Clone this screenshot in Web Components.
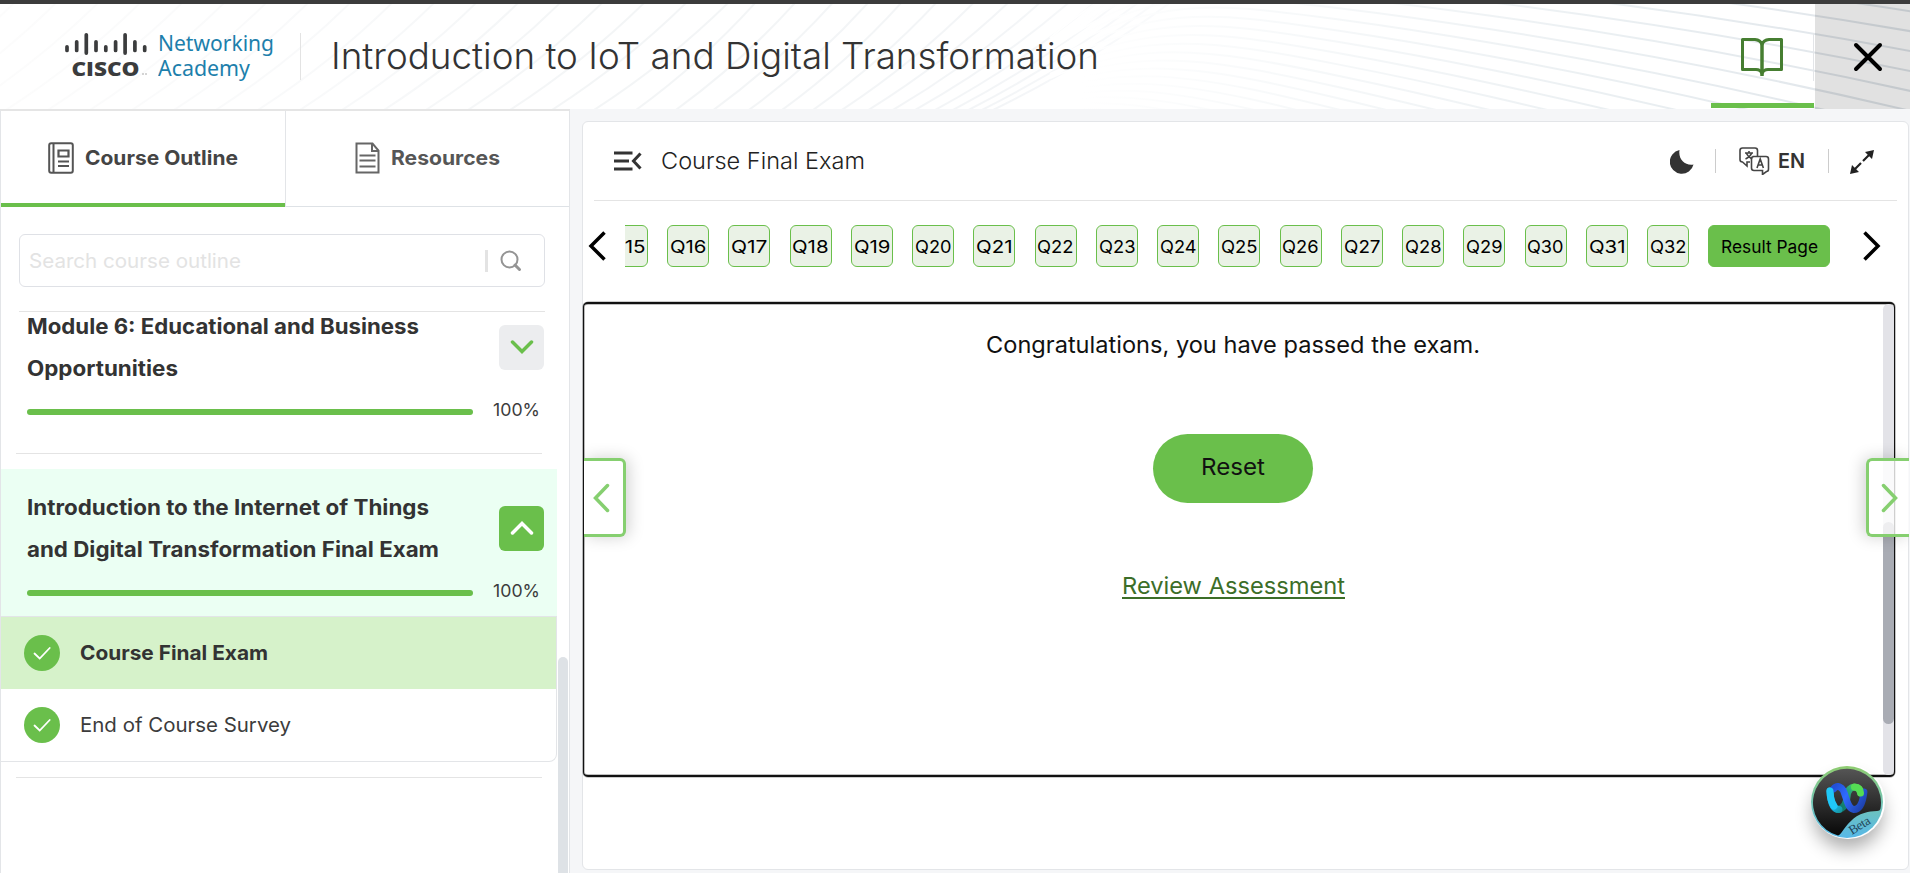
<!DOCTYPE html>
<html lang="en">
<head>
<meta charset="utf-8">
<title>Introduction to IoT and Digital Transformation</title>
<style>
html,body{margin:0;height:100%;overflow:hidden}
body{font-family:Inter,"Open Sans",sans-serif;color:#333;background:#f5f6f8}
</style>
</head>
<body>
<course-app></course-app>
<script>
const define = (name, html, setup) => customElements.define(name, class extends HTMLElement {
  constructor() {
    super();
    const t = document.createElement('template');
    t.innerHTML = html;
    this.attachShadow({ mode: 'open' }).append(t.content.cloneNode(true));
  }
  connectedCallback() { if (setup) setup(this, this.shadowRoot); }
});

/* A single line of text stretched to a given width */
define('fit-text', `<style>:host{display:inline-block;white-space:nowrap;text-decoration:inherit}span{display:inline-block;transform-origin:0 50%;text-decoration:inherit}</style><span><slot></slot></span>`, (el, root) => {
  const w = parseFloat(el.getAttribute('width')), s = root.querySelector('span');
  const now = s.getBoundingClientRect().width;
  if (w && now) { s.style.transform = `scaleX(${w / now})`; s.style.marginRight = (w - now) + 'px'; }
});

define('header-waves', `<style>:host{position:absolute;inset:0;overflow:hidden}svg{display:block}</style>
<svg width="1910" height="105" viewBox="0 4 1910 105" fill="none"><defs>
<linearGradient id="l" gradientUnits="userSpaceOnUse" x1="0" x2="1180" y1="0" y2="0"><stop offset="0" stop-color="#fcfcfc"/><stop offset=".3" stop-color="#f8f9fa"/><stop offset=".5" stop-color="#f3f5f6"/><stop offset=".85" stop-color="#f3f5f7"/><stop offset="1" stop-color="#fbfcfd"/></linearGradient>
<linearGradient id="r" gradientUnits="userSpaceOnUse" x1="1080" x2="1900" y1="0" y2="0"><stop offset="0" stop-color="#fff"/><stop offset=".25" stop-color="#f7f9fa"/><stop offset=".7" stop-color="#e9eef1"/><stop offset="1" stop-color="#dfe4e9"/></linearGradient></defs>
<g id="g" stroke-width="2"></g></svg>`, (el, root) => {
  let p = '', x = -120, gap = 47;
  while (x < 1000) {
    const run = x < 600 ? 135 : x < 800 ? 120 : 120 + (x - 800) * 0.3;
    p += `<path stroke="url(#l)" d="M${x} 110Q${x + run * .55} 62 ${x + run} 2"/>`;
    gap = x > 600 ? Math.max(11, gap - 2.2) : 42;
    x += gap;
  }
  for (let k = -9; k < 15; k++)
    p += `<path stroke="url(#r)" d="M1050 ${62 + k * 4}C1120 ${20 + 7 * k} 1180 ${12 + 9 * k} 1250 ${19 + 10 * k}S1600 ${67 + 15 * k} 1915 ${152 + 20 * k}"/>`;
  root.querySelector('#g').innerHTML = p;
});

define('cisco-logo', `<style>:host{display:flex;gap:11px;width:212px}
.n{color:#1d7fac;font:400 22px/25px "Noto Sans",sans-serif;margin-top:-1px;display:flex;flex-direction:column}
svg{display:block;overflow:visible}text{font:800 20px "Open Sans",sans-serif}</style>
<svg width="82" height="48" viewBox="65 31 82 48" fill="#3b3c3d">
<g stroke="#3b3c3d" stroke-width="3.7" stroke-linecap="round"><path d="M67 46.8v3.6M76.7 41.8v8.6M86.3 34.8v18.3M96 41.8v8.6M105.8 46.8v3.6M115.6 41.8v8.6M125.1 34.8v18.3M134.9 41.8v8.6M144.7 46.8v3.6"/></g>
<text x="71.500" y="75.700" textLength="68" lengthAdjust="spacingAndGlyphs">CISCO</text>
<path d="M142 74h2M145 74h2" stroke="#aaa"/></svg>
<div class="n"><fit-text width="116">Networking</fit-text><fit-text width="92">Academy</fit-text></div>`);

define('top-bar', `<style>
:host{display:block;position:relative;height:105px;border-top:4px solid #3c3c3c;background:#fff}
.row{position:relative;display:flex;height:105px}
cisco-logo{margin:27px 0 0 65px}
.t{margin-left:23px;height:47px;margin-top:29px;border-left:1px solid #e3e3e3;padding-left:30px;font-size:36.500px;font-weight:300;line-height:46px;color:#333}
.book{margin-left:auto;width:103px;height:99px;border-bottom:5px solid #6abf4b;display:flex;justify-content:center}
.book svg{margin:32px 2px 0 0}.d{width:1px;height:48px;margin:29px 1px 0 -1px;background:#e3e5e8}
.x{width:95px;background:rgba(0,0,0,.118);display:flex;align-items:center;justify-content:center}
.x svg{margin:1px 0 0 11px}
</style><header-waves></header-waves><div class="row"><cisco-logo></cisco-logo><div class="t"><fit-text width="768">Introduction to IoT and Digital Transformation</fit-text></div>
<div class="book"><svg width="42" height="42" viewBox="0 0 42 42" fill="none" stroke="#467e31" stroke-width="3"><path d="M1.500 3.500H14q5.500.5 7 5Q22.500 4 28 3.500H40.500V33.500H27q-4.500 0-6 4-1.500-4-6-4H1.500z" stroke-linejoin="round"/><path d="M21 8v32" stroke-width="3.500"/></svg></div><div class="d"></div>
<div class="x"><svg width="30" height="30" viewBox="0 0 30 30" stroke="#000" stroke-width="4" stroke-linecap="round"><path d="M3 3 27 27M27 3 3 27"/></svg></div></div>`);

define('side-tab', `<style>:host{display:flex;box-sizing:border-box;height:96px;flex:1;padding:0 0 1px 47px;font-weight:700;font-size:20px;color:#565656;border-bottom:1px solid #dee2e6;align-items:center;gap:11px}
:host([active]){color:#444;border-bottom:4px solid #6abf4b;padding-bottom:0;padding-top:2px;flex:none;width:284px}
:host(:not([active])){padding-left:69px;border-left:1px solid #e3e5e8}</style><slot name="icon"></slot><slot></slot>`);

define('search-box', `<style>:host{display:flex;box-sizing:border-box;width:526px;height:53px;border:1px solid #dfe1e6;border-radius:6px;margin:27px 0 0 18px;align-items:center;padding:0 22px 0 9px;font-size:20px;color:#e3e3e3}
i{width:3px;height:22px;background:#e3e3e3;margin:0 12px 0 auto}svg{display:block}</style>
<fit-text width="212">Search course outline</fit-text><i></i><svg width="22" height="22" viewBox="0 0 22 22" fill="none" stroke="#949494" stroke-width="2"><circle cx="9.500" cy="9.500" r="8"/><path d="M15 15l4.500 4.500" stroke-width="3" stroke-linecap="round"/></svg>`);

define('module-card', `<style>:host{display:block;box-sizing:border-box;padding:0 0 0 26px;width:556px}
.h{display:flex;justify-content:space-between;align-items:center;padding-right:13px}
.t{font-weight:700;font-size:21px;line-height:42px;height:84px;margin-left:-.5px;position:relative;top:.5px}
.b{width:45px;height:45px;border-radius:6px;background:#ecedef;display:flex;align-items:center;justify-content:center;color:#6abf4b}
:host([open]) .b{background:#6abf4b;color:#fff}:host([open]) svg{transform:scaleY(-1)}
.p{display:flex;align-items:center;height:24px;font-size:17.500px;margin-top:8px;color:#3c3c3c}
.p i{width:446px;height:6px;border-radius:3px;background:#6abf4b;margin-right:20px;margin-top:5px}</style>
<div class="h"><div class="t"><slot></slot></div><div class="b"><svg width="24" height="14" viewBox="0 0 24 14" fill="none" stroke="currentColor" stroke-width="3.500" stroke-linecap="round"><path d="M2.500 2 12 11.500 21.500 2"/></svg></div></div>
<div class="p"><i></i><fit-text width="47">100%</fit-text></div>`);

define('lesson-row', `<style>:host{display:flex;align-items:center;height:72px;box-sizing:border-box;padding-left:23px;gap:20px;font-size:20px;color:#3c3c3c}
:host([current]){background:#d6f2ca;font-weight:700;color:#333}svg{display:block}</style>
<svg width="36" height="36" viewBox="0 0 36 36"><circle cx="18" cy="18" r="18" fill="#6abf4b"/><path d="M10.500 18.500l5.200 5 10-10.500" fill="none" stroke="#fff" stroke-width="1.800" stroke-linecap="round"/></svg><slot></slot>`);

define('side-bar', `<style>:host{display:block;box-sizing:border-box;width:570px;height:764px;background:#fff;border:1px solid #e3e5e8;border-top:2px solid #e5e5e5;border-bottom:0;overflow:hidden}
.tabs{display:flex}.list{display:flex;justify-content:space-between}
.items{width:556px}hr{border:0;height:1px;background:#e4e4e4;margin:0 0 0 15px;width:526px}
hr.top{margin:24px 0 0 18px}.open{background:#ebfff3;padding-top:17px;margin-top:15px;height:130px}
.rows{border:1px solid #e3e5e8;border-left:0;border-radius:0 0 8px 0;background:#fff;width:555px}
.bar{width:10px;height:220px;border-radius:5px 5px 0 0;background:#dee2e6;margin:345px 1px 0 0}
</style>
<div class="tabs"><side-tab active><svg slot="icon" width="26" height="32" viewBox="0 0 26 32" fill="none" stroke="#555" stroke-width="2"><rect x="1.200" y="1.200" width="23.600" height="29.600" rx="2"/><path d="M5.500 1v30M10 19.500h11M10 24h11"/><path d="M10.500 8.500h10v6h-10z" stroke-width="2.200"/></svg><fit-text width="153">Course Outline</fit-text></side-tab>
<side-tab><svg slot="icon" width="25" height="32" viewBox="0 0 25 32" fill="none" stroke="#666" stroke-width="2"><path d="M1.500 1.500h16l6 7V30.500h-22zM17 2v7h6.500M4.500 13.500h16M4.500 18.500h16M4.500 24.500h16"/></svg><fit-text width="109">Resources</fit-text></side-tab></div>
<search-box></search-box><hr class="top">
<div class="list"><div class="items">
<module-card style="margin-top:-7px;position:relative"><fit-text width="392">Module 6: Educational and Business</fit-text><br><fit-text width="151">Opportunities</fit-text></module-card>
<hr style="margin-top:32px">
<div class="open"><module-card open><fit-text width="402">Introduction to the Internet of Things</fit-text><br><fit-text width="412">and Digital Transformation Final Exam</fit-text></module-card></div>
<div class="rows"><lesson-row current><fit-text width="188">Course Final Exam</fit-text></lesson-row><lesson-row><fit-text width="211">End of Course Survey</fit-text></lesson-row></div>
<hr style="margin-top:15px">
</div><div class="bar"></div></div>`);

define('exam-head', `<style>:host{display:flex;align-items:center;box-sizing:border-box;height:79px;margin:0 11px;border-bottom:1px solid #e4e4e4;padding:0 22px 0 20px;color:#222}
svg{display:block}.t{font-size:23px;font-weight:300;margin-left:18.500px;margin-right:auto}.v{width:1px;height:24px;background:#ccc}
.en{font-weight:600;font-size:20px;color:#333;margin:0 23px 0 8px}</style>
<svg width="28" height="20" viewBox="0 0 28 20" fill="none" stroke="#333" stroke-width="3"><path d="M0 2h18.500M0 10h15M0 18h18.500M26.500 2.500l-7 7.500 7 7.500"/></svg>
<div class="t"><fit-text width="204">Course Final Exam</fit-text></div>
<svg width="24" height="24" viewBox="0 0 24 24" fill="#333" style="margin-right:21px;margin-top:2px"><path d="M9.500 0A12 12 0 1 0 23.500 14.500C15 16 8 9 9.500 0z"/></svg><i class="v"></i>
<svg width="31" height="28" viewBox="0 0 31 28" fill="none" stroke="#444" stroke-width="1.600" style="margin-left:23px"><path d="M11 15H8v4l-4.500-4Q1 15 1 12.500V3.500Q1 1 3.500 1H16q2.500 0 2.500 2.500V9"/><path d="M13.500 9.500H27q2.500 0 2.500 2.500v10q0 2.500-2 2.500l-4 3v-4H15q-2.500 0-2.500-2.500v-9q0-2.500 2.500-2.500"/><path d="M6 6h8M10 4v2M7.500 6.500Q9 10 13 12M12.500 6.500Q11 10 6.500 12M18 21l3.200-9 3.200 9M19 18h4.500"/></svg>
<div class="en"><fit-text width="27">EN</fit-text></div><i class="v"></i>
<svg width="26" height="26" viewBox="0 0 26 26" fill="#222" stroke="#222" stroke-width="2.200" style="margin-left:20px;margin-top:1px"><path d="M14 12l6-6M12 14l-6 6" /><path d="M25 1l-2 9-7-7zM1 25l2-9 7 7z" stroke="none"/></svg>`);

define('q-chip', `<style>:host{flex:none;display:flex;box-sizing:border-box;width:42px;height:42px;border:1px solid #6abf4b;border-radius:6px;background:#eaf2e6;align-items:center;justify-content:center;color:#000;font-size:17.5px}
:host([active]){width:122px;background:#6abf4b}</style><slot></slot>`);

define('question-nav', `<style>:host{display:flex;align-items:center;height:42px;padding:24px 27px 0 5px}
.w{width:1213px;margin-left:18px;margin-right:auto;overflow:hidden;display:flex}.s{display:flex;gap:19.25px;margin-left:-19.250px}
svg{display:block;margin-top:-1px}</style>
<svg width="19" height="30" viewBox="0 0 19 30" fill="none" stroke="#000" stroke-width="3.500"><path d="M16.500 1.500 3 15l13.500 13.500"/></svg>
<div class="w"><div class="s"></div></div>
<svg width="19" height="30" viewBox="0 0 19 30" fill="none" stroke="#000" stroke-width="3.500"><path d="M2.500 1.500 16 15 2.500 28.500"/></svg>`, (el, root) => {
  let h = '';
  for (let i = 15; i <= 32; i++) h += `<q-chip><fit-text width="36.500">Q${i}</fit-text></q-chip>`;
  root.querySelector('.s').innerHTML = h + '<q-chip active><fit-text width="97">Result Page</fit-text></q-chip>';
});

define('result-frame', `<style>:host{position:relative;display:block;box-sizing:border-box;height:475px;width:1312px;margin-top:35px;border:1px solid #111;border-top:2px solid #111;border-bottom:2px solid #111;border-radius:5px;box-shadow:0 0 0 .6px #999, inset 0 0 0 .8px #aaa;background:#fff}
.in{display:flex;height:100%}.c{flex:1;display:flex;flex-direction:column;align-items:center;color:#111;font-size:23px;line-height:30px;margin-right:1px}
.m{margin-top:26px}.b{width:160px;height:69px;border-radius:35px;background:#6abf4b;margin-top:74px;display:flex;align-items:center;justify-content:center;padding-bottom:3px;box-sizing:border-box}
.r{margin-top:67.500px;color:#3c6e28;text-decoration:underline;text-decoration-thickness:2px;text-underline-offset:3px}
.track{width:11px;background:#e3e3e8;border-radius:6px;display:flex;align-items:flex-end}.track i{width:100%;height:202px;border-radius:6px;background:#a9acb4;margin-bottom:51px}</style>
<div class="in"><div class="c"><div class="m"><fit-text width="494">Congratulations, you have passed the exam.</fit-text></div><div class="b"><fit-text width="64">Reset</fit-text></div><div class="r"><fit-text width="223">Review Assessment</fit-text></div></div><div class="track"><i></i></div></div>`);

define('page-arrow', `<style>:host{position:absolute;box-sizing:border-box;top:336px;width:42px;height:79px;border:3px solid #86cf70;background:rgba(255,255,255,.8);box-shadow:3px 0 16px rgba(0,0,0,.18);display:flex;align-items:center;justify-content:center}
:host([prev]){left:1px;border-left:0;border-radius:0 6px 6px 0;background:#fff;clip-path:inset(-30px -30px -30px 0);padding-right:5px}
:host([next]){right:-1px;width:43px;border-right:0;border-radius:6px 0 0 6px;box-shadow:-3px 0 16px rgba(0,0,0,.18);clip-path:inset(-30px 0 -30px -30px);padding-left:2px}
:host([next]) svg{transform:scaleX(-1)}</style><svg width="18" height="30" viewBox="0 0 18 30" fill="none" stroke="#86cf70" stroke-width="3.500" stroke-linecap="round"><path d="M15.500 2.500 3.500 15l12 12.500"/></svg>`);

define('assistant-badge', `<style>:host{position:absolute;right:23px;top:643px;width:74px;height:74px;border-radius:50%;box-shadow:0 12px 18px -2px rgba(0,0,0,.32)}svg{display:block;margin-left:-1px}text{font:13px "Liberation Serif",serif;fill:#24475a}</style>
<svg width="74" height="74" viewBox="0 0 74 74" fill="none" stroke-linecap="round"><defs><linearGradient id="a" x2="0" y2="1"><stop stop-color="#8fcc70"/><stop offset=".55" stop-color="#70c4b8"/><stop offset="1" stop-color="#57b8e8"/></linearGradient><linearGradient id="b" x2="0" y2="1"><stop stop-color="#555"/><stop offset="1" stop-color="#080808"/></linearGradient>
<linearGradient id="c" gradientUnits="userSpaceOnUse" x1="18" y1="25" x2="36" y2="46"><stop stop-color="#1fcdfa"/><stop offset=".6" stop-color="#18b0e8"/><stop offset="1" stop-color="#17908a"/></linearGradient>
<linearGradient id="d" gradientUnits="userSpaceOnUse" x1="30" y1="40" x2="52" y2="22"><stop stop-color="#107a6c"/><stop offset=".6" stop-color="#2aa87a"/><stop offset="1" stop-color="#60e84c"/></linearGradient>
<linearGradient id="e" gradientUnits="userSpaceOnUse" x1="26" y1="20" x2="56" y2="40"><stop stop-color="#2350d8"/><stop offset=".4" stop-color="#2f6bff"/><stop offset="1" stop-color="#1d3fa8"/></linearGradient></defs>
<circle cx="37" cy="37" r="36" fill="url(#a)"/><path d="M28 70.500A34 34 0 1 1 70.500 43.500Q70 46 67 46C48 47 43 53 34 64Q30 70 28 70.500z" fill="url(#b)"/>
<g stroke-width="7"><path d="M28 44.500Q36 43 37 32T46 22.500Q50 23 51 28" stroke="url(#d)"/><path d="M20 26Q21 44.500 29 44.500" stroke="url(#c)"/><path d="M23.500 24Q28 18.500 33 25C36 30 37 43 43.500 44.500Q52 45 54 27" stroke="url(#e)" stroke-width="6.800"/><path d="M20 26q0 9 4 15" stroke="#20c8f8"/><path d="M44.500 22Q50 22.500 50.500 28" stroke="#55dc54"/></g>
<text transform="translate(42 70) rotate(-32)" textLength="23">Beta</text></svg>`);

define('exam-card', `<style>:host{position:relative;display:block;box-sizing:border-box;width:1327px;height:749px;background:#fff;border:1px solid #e3e5e8;border-radius:6px;margin:12px 0 0 12px}</style>
<exam-head></exam-head><question-nav></question-nav><result-frame></result-frame><page-arrow prev></page-arrow><page-arrow next></page-arrow><assistant-badge></assistant-badge>`);

define('course-app', `<style>:host{display:block;width:1910px;height:873px;overflow:hidden;background:#f5f6f8}.m{display:flex}</style><top-bar></top-bar><div class="m"><side-bar></side-bar><exam-card></exam-card></div>`);
</script>
</body>
</html>
